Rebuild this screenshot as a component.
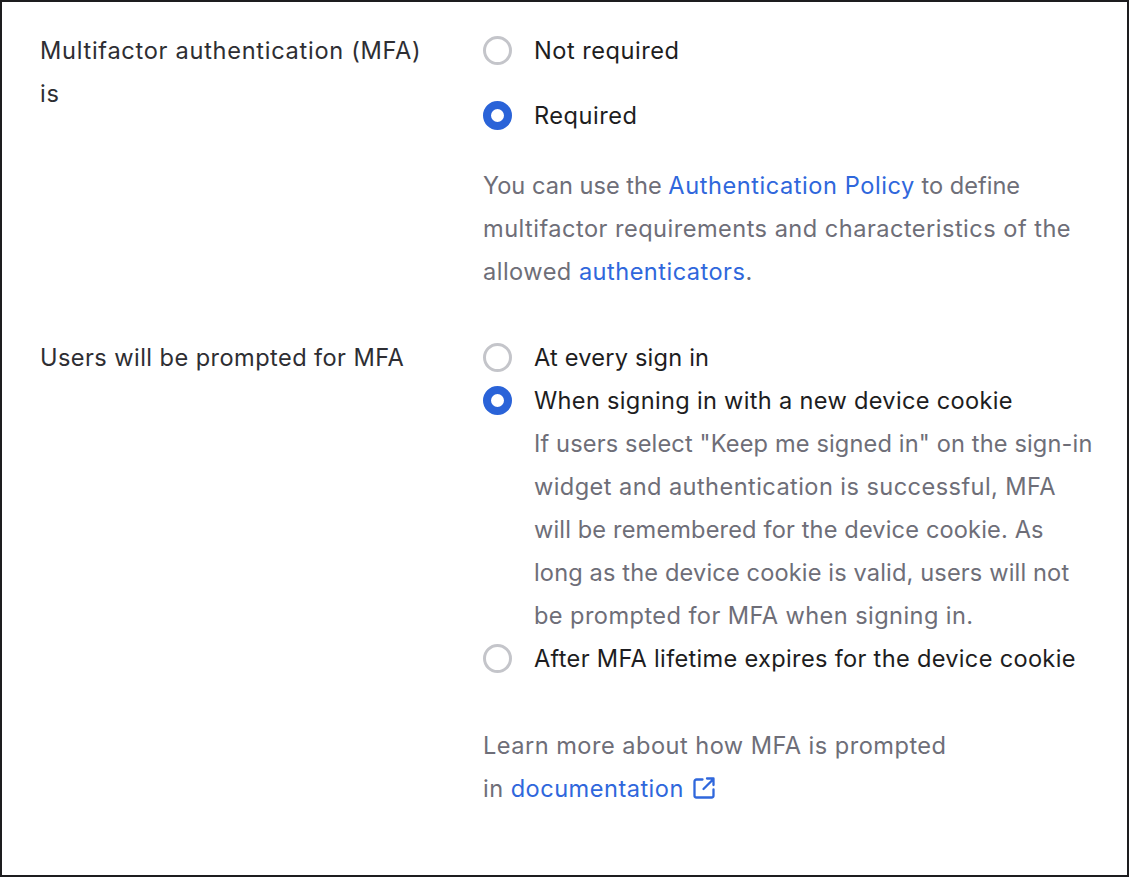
<div class="frame">
  <section class="row first">
    <div class="label wide">Multifactor authentication (MFA) is</div>
    <div class="field">
      <div class="spaced">
        <label class="radio"><span class="dot"></span><span class="opt loose">Not required</span></label>
        <label class="radio"><span class="dot on"></span><span class="opt loose">Required</span></label>
      </div>
      <p class="hint"><span class="tight">You can use the <a href="#a">Authentication Policy</a> to define</span> multifactor requirements and characteristics of the allowed <a href="#b">authenticators</a>.</p>
    </div>
  </section>
  <section class="row second">
    <div class="label">Users will be prompted for MFA</div>
    <div class="field">
      <label class="radio"><span class="dot"></span><span class="opt snug">At every sign in</span></label>
      <label class="radio"><span class="dot on"></span><span class="opt">When signing in with a new device cookie</span></label>
      <p class="desc">If users select "Keep me signed in" on the sign-in<br /><span class="open">widget and authentication is successful, MFA</span><br />will be remembered for the device cookie. As<br />long as the device cookie is valid, users will not<br /><span class="open">be prompted for MFA when signing in.</span></p>
      <label class="radio"><span class="dot"></span><span class="opt">After MFA lifetime expires for the device cookie</span></label>
      <p class="hint more">Learn more about how MFA is prompted<br />in <a href="#c">documentation</a> <svg class="ext" viewBox="0 0 24 24" width="24" height="24" fill="none" stroke="#2f67dc" stroke-width="2.3" stroke-linecap="round" stroke-linejoin="round"><path d="M10.5 3.5H4.5a2 2 0 0 0-2 2v14a2 2 0 0 0 2 2h15a2 2 0 0 0 2-2v-6" /><path d="M11.5 13 21.5 3M15 2.5h6.5V9" /></svg></p>
    </div>
  </section>
</div>

<style>
  :global(body) {
    margin: 0;
    background: #fff;
  }
  .frame {
    box-sizing: border-box;
    width: 1129px;
    height: 877px;
    border: 2px solid #1d1d1f;
    padding: 27px 0 0 38px;
    font-family: Inter, "Liberation Sans", sans-serif;
    font-size: 23.6px;
    line-height: 43px;
    color: #1d1d21;
    background: #fff;
  }
  .row {
    display: grid;
    grid-template-columns: 443px 612px;
  }
  .second {
    margin-top: 43px;
  }
  .label {
    width: 395px;
    color: #2e2e33;
    letter-spacing: 0.43px;
  }
  .label.wide {
    letter-spacing: 0.71px;
  }
  .spaced {
    display: flex;
    flex-direction: column;
    gap: 22px;
  }
  .radio {
    display: flex;
    align-items: center;
    gap: 22px;
    height: 43px;
  }
  .dot {
    box-sizing: border-box;
    flex: none;
    width: 29px;
    height: 29px;
    border-radius: 50%;
    border: 3px solid #c4c5ca;
    background: #fff;
  }
  .dot.on {
    border: 8.5px solid #2a63d8;
  }
  .opt {
    white-space: nowrap;
    letter-spacing: 0.31px;
  }
  .opt.loose {
    letter-spacing: 0.5px;
  }
  .opt.snug {
    letter-spacing: 0.2px;
  }
  p {
    margin: 0;
    color: #6e6e78;
  }
  .hint {
    margin-top: 27px;
    letter-spacing: 0.47px;
  }
  .tight {
    letter-spacing: 0;
  }
  .tight a {
    letter-spacing: 0.55px;
  }
  .desc {
    margin-left: 51px;
    white-space: nowrap;
    letter-spacing: 0.14px;
  }
  .open {
    letter-spacing: 0.42px;
  }
  .more {
    margin-top: 44px;
  }
  a {
    color: #2f67dc;
    text-decoration: none;
  }
  .ext {
    vertical-align: -3px;
    margin-left: 1px;
  }
</style>
